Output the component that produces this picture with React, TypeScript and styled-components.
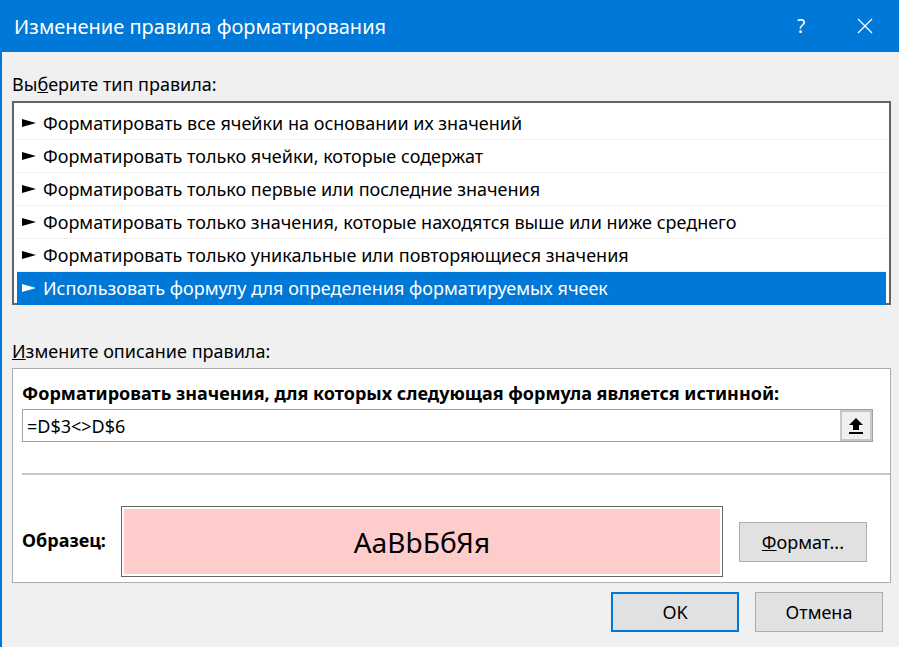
import styled, { createGlobalStyle } from "styled-components";

const Global = createGlobalStyle`
  body { margin: 0; font-family: "Noto Sans", "Open Sans", sans-serif; background: #f0f0f0; }
`;

const items = [
  "Форматировать все ячейки на основании их значений",
  "Форматировать только ячейки, которые содержат",
  "Форматировать только первые или последние значения",
  "Форматировать только значения, которые находятся выше или ниже среднего",
  "Форматировать только уникальные или повторяющиеся значения",
  "Использовать формулу для определения форматируемых ячеек",
];

const App = () => (
  <Dialog>
    <Global />
    <TitleBar>
      <Title>Изменение правила форматирования</Title>
      <TitleBtn>?</TitleBtn>
      <TitleBtn>
        <svg width="16" height="16" viewBox="0 0 16 16">
          <path d="M1 1L15 15M15 1L1 15" stroke="#fff" strokeWidth="1.3" />
        </svg>
      </TitleBtn>
    </TitleBar>
    <Body>
      <Label>
        Вы<u>б</u>ерите тип правила:
      </Label>
      <List>
        {items.map((t, i) => (
          <Item key={t} selected={i === items.length - 1}>
            <Arrow>
              <svg width="14" height="8" viewBox="0 0 14 8">
                <path d="M0 0L14 4L0 8Z" fill="currentColor" />
              </svg>
            </Arrow>
            {t}
          </Item>
        ))}
      </List>
      <Label $top={34}>
        <u>И</u>змените описание правила:
      </Label>
      <Panel>
        <Bold>Форматировать значения, для которых следующая формула является истинной:</Bold>
        <Input>
          <InputText>=D$3&lt;&gt;D$6</InputText>
          <PickBtn>
            <svg width="16" height="18" viewBox="0 0 16 18">
              <path d="M8 1L1 8H5V13H11V8H15Z" fill="#000" />
              <rect x="1" y="15" width="14" height="2" fill="#000" />
            </svg>
          </PickBtn>
        </Input>
        <Sep />
        <SampleRow>
          <Bold as="span">Образец:</Bold>
          <Sample>
            <SampleInner>AaBbБбЯя</SampleInner>
          </Sample>
          <Button>
            <u>Ф</u>ормат...
          </Button>
        </SampleRow>
      </Panel>
      <Footer>
        <Button primary>OK</Button>
        <Button>Отмена</Button>
      </Footer>
    </Body>
  </Dialog>
);

const Dialog = styled.div`
  width: 899px;
  height: 647px;
  background: #f0f0f0;
  border-left: 2px solid #0078d7;
  box-sizing: border-box;
  overflow: hidden;
`;

const TitleBar = styled.div`
  height: 52px;
  background: #0078d7;
  color: #fff;
  display: flex;
  align-items: center;
  padding-left: 12px;
`;

const Title = styled.div`
  flex: 1;
  font-size: 20px;
`;

const TitleBtn = styled.div`
  width: 60px;
  display: flex;
  justify-content: center;
  font-size: 19px;
  margin-right: 4px;
`;

const Body = styled.div`
  padding: 20px 8px 0 10px;
`;

const Label = styled.div<{ $top?: number }>`
  font-size: 18px;
  color: #000;
  margin-top: ${(p) => p.$top || 0}px;
  margin-bottom: 5px;
`;

const List = styled.div`
  border: 2px solid #646464;
  background: #fff;
  height: 204px;
  box-sizing: border-box;
  padding: 4px 3px;
`;

const Item = styled.div<{ selected?: boolean }>`
  height: 33px;
  display: flex;
  align-items: center;
  font-size: 18px;
  padding-left: 5px;
  background: ${(p) => (p.selected ? "#0078d7" : "#fff")};
  color: ${(p) => (p.selected ? "#fff" : "#000")};
  border-bottom: 1px solid ${(p) => (p.selected ? "#0078d7" : "#f0f0f0")};
  box-sizing: border-box;
`;

const Arrow = styled.span`
  display: flex;
  margin-right: 7px;
`;

const Panel = styled.div`
  background: #fff;
  border: 1px solid #adadad;
  height: 215px;
  box-sizing: border-box;
  padding: 12px 9px 0;
`;

const Bold = styled.div`
  font-size: 18px;
  font-weight: 700;
  margin-bottom: 4px;
`;

const Input = styled.div`
  height: 33px;
  border: 1px solid #a0a0a0;
  display: flex;
  align-items: center;
  box-sizing: border-box;
  margin-right: 8px;
`;

const InputText = styled.div`
  flex: 1;
  font-size: 18px;
  padding-left: 4px;
`;

const PickBtn = styled.div`
  width: 32px;
  height: 31px;
  background: #f0f0f0;
  display: flex;
  align-items: center;
  justify-content: center;
  box-sizing: border-box;
  border: 2px solid #c8c8c8;
`;

const Sep = styled.div`
  height: 2px;
  background: #c8c8c8;
  margin: 31px -9px 0 0;
`;

const SampleRow = styled.div`
  display: flex;
  align-items: center;
  margin-top: 31px;
`;

const Sample = styled.div`
  margin-left: 15px;
  width: 602px;
  height: 71px;
  border: 1px solid #646464;
  padding: 2px;
  box-sizing: border-box;
  background: #fff;
`;

const SampleInner = styled.div`
  height: 100%;
  background: #ffcccc;
  display: flex;
  align-items: center;
  justify-content: center;
  font-size: 28px;
`;

const Button = styled.button<{ primary?: boolean }>`
  width: 128px;
  height: 40px;
  background: #e1e1e1;
  border: ${(p) => (p.primary ? "2px solid #0078d7" : "1px solid #adadad")};
  font-family: "Noto Sans", "Open Sans", sans-serif;
  font-size: 18px;
  color: #000;
  margin-left: 16px;
`;

const Footer = styled.div`
  display: flex;
  justify-content: flex-end;
  margin-top: 9px;
  padding-right: 8px;
`;

export default App;
